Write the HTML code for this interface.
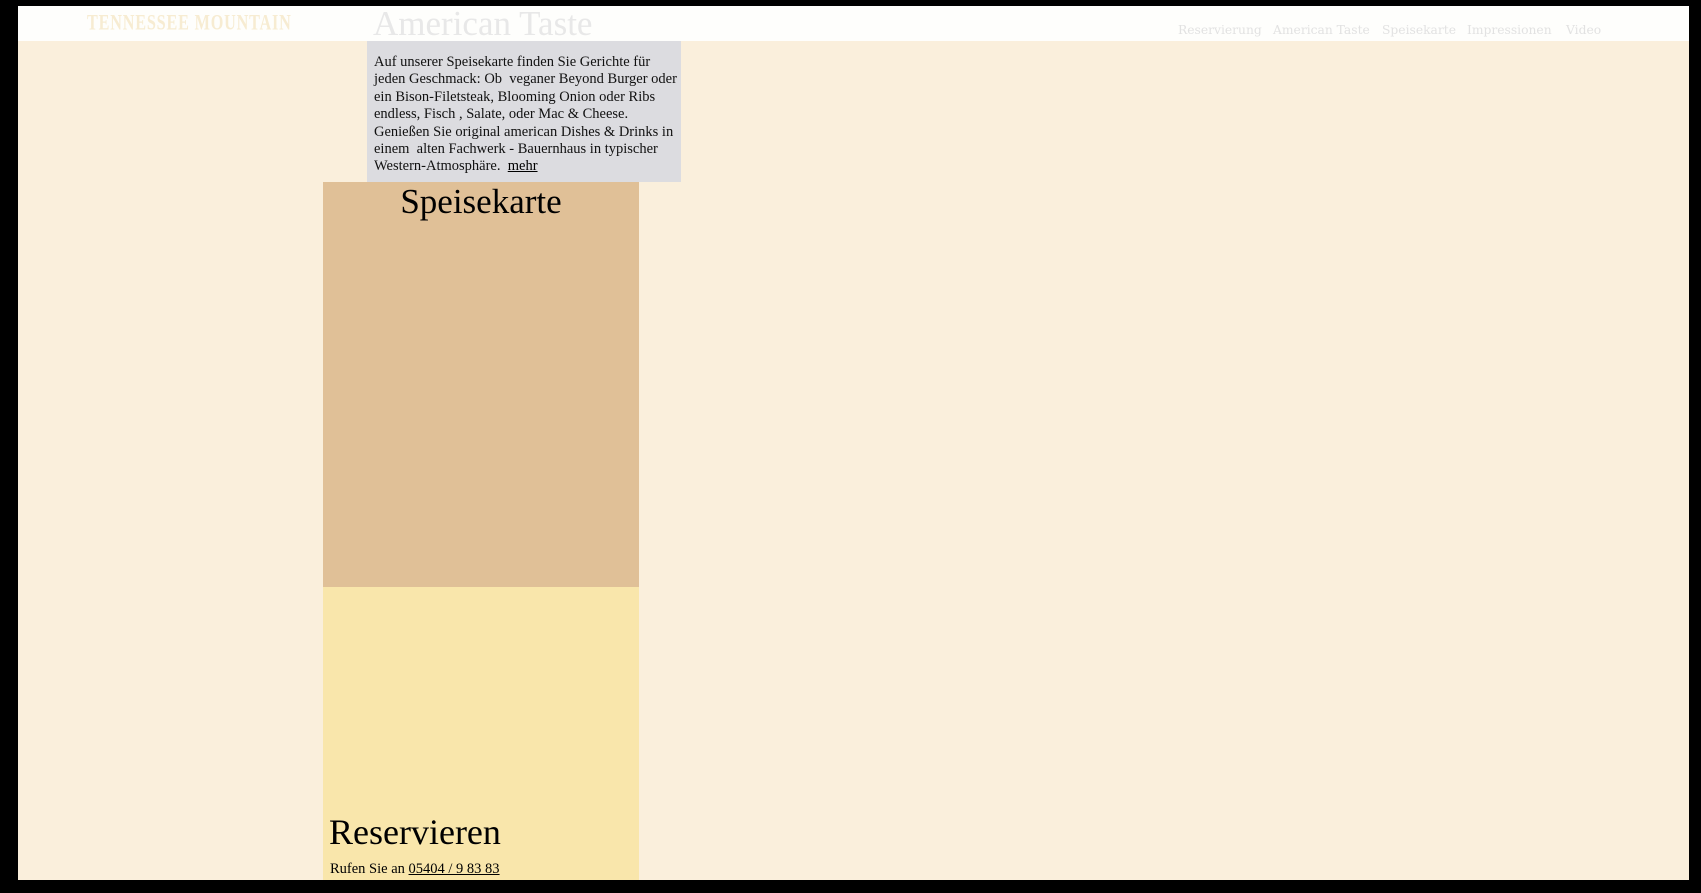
<!DOCTYPE html>
<html><head><meta charset="utf-8"><style>
*{margin:0;padding:0;box-sizing:border-box}
html,body{width:1701px;height:893px;overflow:hidden;background:#000}
.page{position:absolute;left:18px;top:6px;width:1671px;height:874px;background:#faefdc;overflow:hidden}
.hdr{position:absolute;left:0;top:0;width:100%;height:35px;background:#fefefc}
.logo{position:absolute;left:69px;top:5px;font:bold 20px "Liberation Serif",serif;color:#f7ecd2;letter-spacing:1px;transform:scale(0.81,1.1);transform-origin:left top;white-space:nowrap}
.nav{position:absolute;top:17px;font:12.3px "DejaVu Serif",serif;color:#e2e2e2;white-space:nowrap}
.at{position:absolute;left:355px;top:-2px;font:35px "Liberation Serif",serif;color:#e8e8e8;white-space:nowrap}
.gray{position:absolute;left:349px;top:35px;width:314px;height:141px;background:#dcdce0;padding:13px 7px;font:14.5px/17.4px "Liberation Serif",serif;color:#111;white-space:nowrap}
.tan{position:absolute;left:305px;top:176px;width:316px;height:405px;background:#e0c097}
.tan h2{font:normal 35px "Liberation Serif",serif;text-align:center;margin-top:0;color:#000}
.yel{position:absolute;left:305px;top:581px;width:316px;height:300px;background:#f9e6ab}
.yel h2{position:absolute;left:6px;top:224px;font:normal 36px "Liberation Serif",serif;color:#000;white-space:nowrap}
.yel p{position:absolute;left:7px;top:274px;font:14.5px "Liberation Serif",serif;white-space:nowrap}
a{color:#000;text-decoration:underline}
</style></head><body>
<div class="page">
<div class="hdr"></div>
<div class="logo">TENNESSEE MOUNTAIN</div>
<div class="at">American Taste</div>
<div class="nav" style="left:1160px">Reservierung</div>
<div class="nav" style="left:1255px">American Taste</div>
<div class="nav" style="left:1364px">Speisekarte</div>
<div class="nav" style="left:1449px">Impressionen</div>
<div class="nav" style="left:1548px">Video</div>
<div class="gray">Auf unserer Speisekarte finden Sie Gerichte für<br>jeden Geschmack: Ob&nbsp; veganer Beyond Burger oder<br>ein Bison-Filetsteak, Blooming Onion oder Ribs<br>endless, Fisch , Salate, oder Mac &amp; Cheese.<br>Genießen Sie original american Dishes &amp; Drinks in<br>einem&nbsp; alten Fachwerk - Bauernhaus in typischer<br>Western-Atmosphäre.&nbsp; <a>mehr</a></div>
<div class="tan"><h2>Speisekarte</h2></div>
<div class="yel"><h2>Reservieren</h2><p>Rufen Sie an <a>05404 / 9 83 83</a></p></div>
</div>
</body></html>
